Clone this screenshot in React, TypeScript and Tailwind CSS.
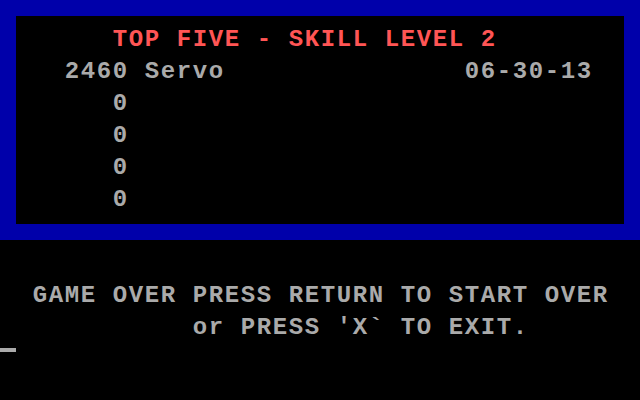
const font = { fontFamily: '"Liberation Mono", "DejaVu Sans Mono", monospace' };

// one text row of the 40-column screen: every character sits in its own 16px cell
function Row({ text = '', className = '' }: { text?: string; className?: string }) {
  return (
    <div className={`h-4 leading-4 flex text-[24px] font-bold ${className}`}>
      {text.split('').map((ch, i) => (
        <span key={i} className="w-4 shrink-0 flex justify-center whitespace-pre">
          {ch}
        </span>
      ))}
    </div>
  );
}

export default function App() {
  return (
    <main className="w-[640px] h-[400px] bg-black overflow-hidden text-[#aaaaaa]" style={font}>
      <section className="h-[240px] bg-[#0000aa] p-4">
        <div className="h-[208px] bg-black">
          <Row />
          <Row text="      TOP FIVE - SKILL LEVEL 2" className="text-[#ff5555]" />
          <Row />
          <Row text="   2460 Servo               06-30-13" />
          <Row />
          <Row text="      0" />
          <Row />
          <Row text="      0" />
          <Row />
          <Row text="      0" />
          <Row />
          <Row text="      0" />
        </div>
      </section>

      <section>
        <Row />
        <Row />
        <Row />
        <Row text="  GAME OVER PRESS RETURN TO START OVER" />
        <Row />
        <Row text="            or PRESS 'X` TO EXIT." />
        <div className="h-4 flex items-end">
          <div className="w-4 h-1 bg-[#aaaaaa]" />
        </div>
      </section>
    </main>
  );
}
